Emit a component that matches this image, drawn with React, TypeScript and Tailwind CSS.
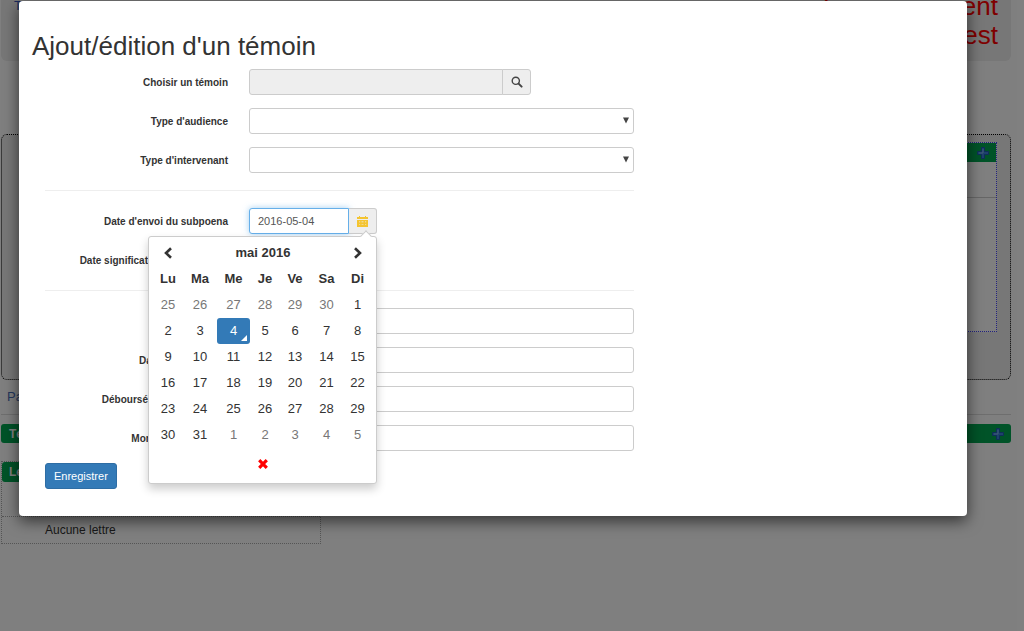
import React, { useState } from 'react';

const MONTH_ROWS: number[][] = [
  [25, 26, 27, 28, 29, 30, 1],
  [2, 3, 4, 5, 6, 7, 8],
  [9, 10, 11, 12, 13, 14, 15],
  [16, 17, 18, 19, 20, 21, 22],
  [23, 24, 25, 26, 27, 28, 29],
  [30, 31, 1, 2, 3, 4, 5],
];

const DAY_NAMES = ['Lu', 'Ma', 'Me', 'Je', 'Ve', 'Sa', 'Di'];

const inputClass = 'h-[26px] rounded-[3px] border border-[#ccc] bg-white px-2 text-[11px] text-[#555] outline-none';

// Icons
const SearchIcon: React.FC = () => (
  <svg width="12" height="12" viewBox="0 0 12 12" fill="none" stroke="#444">
    <circle cx="4.8" cy="4.8" r="3.6" strokeWidth="1.4" />
    <path d="M7.6 7.6 L10.6 10.6" strokeWidth="2" strokeLinecap="round" />
  </svg>
);

const CalendarIcon: React.FC = () => (
  <svg width="11" height="11" viewBox="0 0 11 11" fill="#f4c430">
    <path d="M0 2 L0 1 L2 1 L2 0 L3 0 L3 1 L8 1 L8 0 L9 0 L9 1 L11 1 L11 3 L0 3 Z" />
    <path fillRule="evenodd" d="M0 4 H11 V11 H0 Z M2 5.6 V6.2 H3.2 V5.6 Z M4.5 5.6 V6.2 H6.5 V5.6 Z M8 5.6 V6.2 H9.2 V5.6 Z M2 8 V8.6 H3.2 V8 Z M4.5 8 V8.6 H6.5 V8 Z M8 8 V8.6 H9.2 V8 Z" />
  </svg>
);

const ChevronIcon: React.FC<{ next?: boolean }> = ({ next }) => (
  <svg width="10" height="12" viewBox="0 0 10 12" fill="none" stroke="#333" strokeWidth="2.6">
    <path d={next ? 'M2 1.2 L7 6 L2 10.8' : 'M8 1.2 L3 6 L8 10.8'} />
  </svg>
);

const RemoveIcon: React.FC = () => (
  <svg width="10" height="10" viewBox="0 0 10 10" stroke="#f00" strokeWidth="3.2">
    <path d="M1.2 1.2 L8.8 8.8 M8.8 1.2 L1.2 8.8" />
  </svg>
);

const PlusIcon: React.FC = () => (
  <svg width="12" height="12" viewBox="0 0 12 12">
    <path d="M4.5 0.5 H7.5 V4.5 H11.5 V7.5 H7.5 V11.5 H4.5 V7.5 H0.5 V4.5 H4.5 Z" fill="#3c82d8" stroke="#1c5fae" />
    <path d="M6 2 V6 H2" fill="none" stroke="#86b8f0" />
  </svg>
);

type RowProps = { id: string; label: string; children: React.ReactNode };

const FormRow: React.FC<RowProps> = ({ id, label, children }) => (
  <div className="flex items-center">
    <label htmlFor={id} className="w-[183px] shrink-0 whitespace-nowrap text-right text-[10px] font-bold">
      {label}
    </label>
    <div className="ml-[21px] flex min-w-0 flex-1">{children}</div>
  </div>
);

const SelectBox: React.FC<{ id: string }> = ({ id }) => (
  <div className="relative flex flex-1">
    <select id={id} className={`${inputClass} w-full appearance-none`} />
    <svg className="pointer-events-none absolute right-[5px] top-[9px]" width="6" height="7" viewBox="0 0 6 7">
      <path d="M0 0.5 H6 L3 6.5 Z" fill="#444" />
    </svg>
  </div>
);

const DatePicker: React.FC = () => (
  <div className="absolute right-0 top-[28px] z-10 w-[229px] rounded-[3px] border border-[#ccc] bg-white px-1 pb-[7px] pt-[3px] shadow-[0_5px_10px_rgba(0,0,0,0.2)]">
    <span className="absolute right-[6px] top-[-5px] size-2 rotate-45 border-l border-t border-[#ccc] bg-white" />
    <table className="w-full table-fixed border-collapse text-center text-[13px] text-[#333]">
      <colgroup>
        <col className="w-[30px]" />
        <col className="w-[34px]" />
        <col className="w-[33px]" />
        <col className="w-[30px]" />
        <col className="w-[30px]" />
        <col className="w-[33px]" />
        <col className="w-[29px]" />
      </colgroup>
      <thead>
        <tr className="h-[26px]">
          <th>
            <button type="button" aria-label="Mois précédent" className="block w-full">
              <span className="flex justify-center"><ChevronIcon /></span>
            </button>
          </th>
          <th colSpan={5}>mai 2016</th>
          <th>
            <button type="button" aria-label="Mois suivant" className="block w-full">
              <span className="flex justify-center"><ChevronIcon next /></span>
            </button>
          </th>
        </tr>
        <tr className="h-[26px]">
          {DAY_NAMES.map((name) => (
            <th key={name}>{name}</th>
          ))}
        </tr>
      </thead>
      <tbody>
        {MONTH_ROWS.map((week, row) => (
          <tr key={row} className="h-[26px]">
            {week.map((day, col) => {
              const outside = (row === 0 && day > 20) || (row === 5 && day < 20);
              if (row === 1 && day === 4) {
                return (
                  <td key={col} className="relative rounded-[3px] bg-[#337ab7] p-0 text-white">
                    {day}
                    <svg className="absolute bottom-[3px] right-[3px]" width="6" height="6" viewBox="0 0 6 6">
                      <path d="M6 0 V6 H0 Z" fill="#fff" />
                    </svg>
                  </td>
                );
              }
              return (
                <td key={col} className={outside ? 'p-0 text-[#777]' : 'p-0'}>
                  {day}
                </td>
              );
            })}
          </tr>
        ))}
      </tbody>
    </table>
    <button type="button" aria-label="Effacer la date" className="mt-1 flex h-6 w-full items-center justify-center">
      <RemoveIcon />
    </button>
  </div>
);

const Background: React.FC = () => (
  <div className="absolute inset-0 overflow-hidden pl-px pr-[13px] text-[13px]" aria-hidden="true">
    <div className="flex h-[61px] justify-between rounded-b-md bg-[#eee] px-[13px]">
      <span className="-mt-1 text-[#35b]">Témoins</span>
      <div className="-mt-2 text-right text-[26px] leading-[29px] text-[#f00]">
        <p>Environnement</p>
        <p>de test</p>
      </div>
    </div>
    <div className="mt-[73px] h-[246px] rounded-md border border-dotted border-black bg-[#eee] py-[7px] pl-8 pr-[13px]">
      <div className="h-[190px] border border-dotted border-[#44f] bg-white">
        <div className="flex h-[19px] items-center justify-end bg-[#00a651] pr-[7px]"><PlusIcon /></div>
        <div className="h-9 border-b border-[#ccc]" />
      </div>
    </div>
    <div className="flex h-[35px] items-center border-b border-[#ddd] pl-[6px] text-[#4a6eb8]">Paiements</div>
    <div className="mt-[9px] flex h-[19px] items-center justify-between rounded-[3px] bg-[#00a651] pl-2 pr-[7px] text-xs font-bold text-white">
      Témoins
      <PlusIcon />
    </div>
    <div className="mt-[18px] w-[320px] border border-dotted border-[#aaa] text-xs">
      <div className="flex h-5 items-center rounded-[3px] bg-[#00a651] pl-[7px] font-bold text-white">Lettres</div>
      <div className="mt-[34px] flex h-[27px] items-center border-t border-dotted border-[#aaa] pl-[43px] text-[#333]">Aucune lettre</div>
    </div>
  </div>
);

const App: React.FC = () => {
  const [sentDate, setSentDate] = useState('2016-05-04');

  return (
    <div className="relative min-h-screen bg-white font-['Liberation_Sans',Arial,sans-serif] text-[#333]">
      <Background />
      <div className="absolute inset-0 bg-black/50" />

      <div className="relative pl-[19px] pr-[57px] pt-px">
        <div role="dialog" aria-labelledby="dialog-title" className="rounded bg-white pb-[27px] pl-[13px] pt-[31px] shadow-[0_5px_15px_rgba(0,0,0,0.6)]">
          <h1 id="dialog-title" className="text-[26px] leading-[29px]">Ajout/édition d'un témoin</h1>

          <form className="ml-[13px] mt-2 w-[63%] min-w-[560px] max-w-[589px]" onSubmit={(e) => e.preventDefault()}>
            <div className="flex flex-col gap-[13px]">
              <FormRow id="witness" label="Choisir un témoin">
                <input id="witness" readOnly className="h-[26px] w-[254px] rounded-l-[3px] border border-[#ccc] bg-[#eee] px-2 text-[11px]" />
                <button type="button" aria-label="Rechercher" className="-ml-px flex h-[26px] w-[29px] items-center justify-center rounded-r-[3px] border border-[#ccc] bg-[#eee]">
                  <SearchIcon />
                </button>
              </FormRow>
              <FormRow id="hearing" label="Type d'audience">
                <SelectBox id="hearing" />
              </FormRow>
              <FormRow id="party" label="Type d'intervenant">
                <SelectBox id="party" />
              </FormRow>
            </div>

            <hr className="my-[17px] border-[#eee]" />

            <div className="flex flex-col gap-[13px]">
              <FormRow id="sent" label="Date d'envoi du subpoena">
                <div className="relative flex">
                  <input
                    id="sent"
                    className="h-[26px] w-[100px] rounded-l-[3px] border border-[#66afe9] bg-white px-2 text-[11px] text-[#555] shadow-[0_0_6px_rgba(102,175,233,0.6)] outline-none"
                    value={sentDate}
                    onChange={(e) => setSentDate(e.target.value)}
                  />
                  <button type="button" aria-label="Calendrier" className="flex h-[26px] w-7 items-center justify-center rounded-r-[3px] border border-l-0 border-[#ccc] bg-[#eee]">
                    <CalendarIcon />
                  </button>
                  <DatePicker />
                </div>
              </FormRow>
              <FormRow id="served" label="Date signification du subpoena">
                <input id="served" className={`${inputClass} w-32`} />
              </FormRow>
            </div>

            <hr className="my-[17px] border-[#eee]" />

            <div className="flex flex-col gap-[13px]">
              <FormRow id="distance" label="Distance">
                <input id="distance" className={`${inputClass} flex-1`} />
              </FormRow>
              <FormRow id="payment" label="Date de versement">
                <input id="payment" className={`${inputClass} flex-1`} />
              </FormRow>
              <FormRow id="expenses" label="Déboursés remboursables">
                <input id="expenses" className={`${inputClass} flex-1`} />
              </FormRow>
              <FormRow id="amount" label="Montant des dépens">
                <input id="amount" className={`${inputClass} flex-1`} />
              </FormRow>
            </div>

            <button type="submit" className="mt-3 h-[26px] rounded-[3px] border border-[#2e6da4] bg-[#337ab7] px-2 text-[11px] text-white">
              Enregistrer
            </button>
          </form>
        </div>
      </div>
    </div>
  );
};

export default App;
